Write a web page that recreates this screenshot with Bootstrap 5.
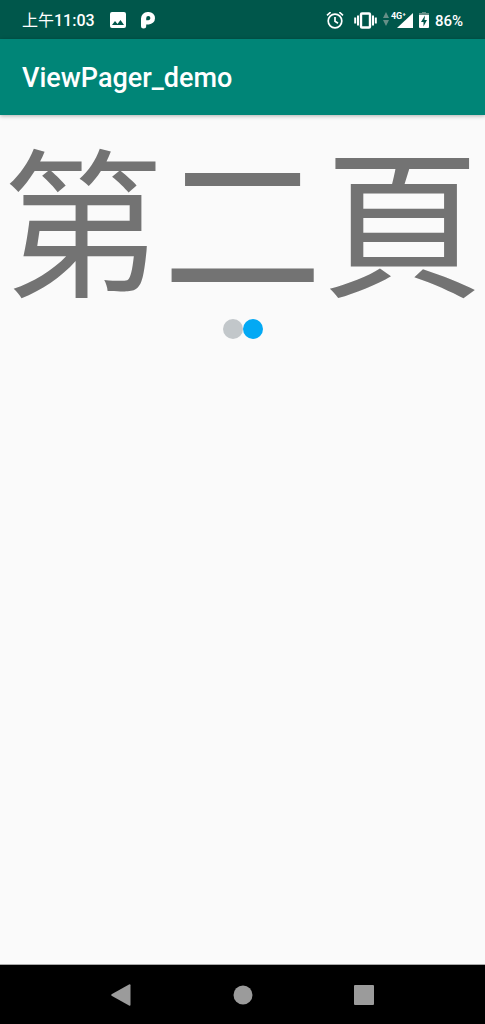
<!DOCTYPE html>
<html lang="zh-Hant">
<head>
<meta charset="utf-8">
<meta name="viewport" content="width=device-width, initial-scale=1">
<title>ViewPager_demo</title>
<link href="https://cdn.jsdelivr.net/npm/bootstrap@5.3.0/dist/css/bootstrap.min.css" rel="stylesheet">
<style>
body { font-family: Roboto, "Noto Sans CJK TC", sans-serif; background: #fafafa; }
svg { display: block; flex: none; }
.status-bar { height: 39px; background: #00574b; color: #fff; font-size: 16px; line-height: 24px; padding: 2px 22px 0; }
.status-bar .battery-level { font-size: 15px; font-weight: 500; }
.clock-time { font-weight: 500; }
.notices { gap: 15px; }
.status-icons { gap: 6px; }
.network { width: 22px; height: 18px; }
.network-type { font-size: 9px; line-height: 8px; font-weight: 700; }
.app-bar { height: 76px; background: #008577; color: #fff; padding: 2px 22px 0; box-shadow: 0 1px 4px rgba(0,0,0,.3); }
.app-title { font-size: 27px; line-height: 36px; font-weight: 500; }
.page-title { font-size: 160px; line-height: 176px; font-weight: 400; color: #737373; padding-top: 28px; }
.pager-dot { width: 20px; height: 20px; border: 0; padding: 0; background: #c2c7ca; }
.pager-dot.active { background: #03a9f4; }
.system-nav { height: 60px; background: #000; border-top: 1px solid #aaa; color: #9b9b9b; }
.system-nav button { width: 25%; color: inherit; }
</style>
</head>
<body>
<div class="d-flex flex-column min-vh-100">
  <div class="status-bar d-flex align-items-center justify-content-between">
    <div class="notices d-flex align-items-center text-nowrap">
      <span>上午<span class="clock-time">11:03</span></span>
      <svg width="16" height="18" viewBox="0 0 16 18" role="img" aria-label="Picture"><path fill="#fff" fill-rule="evenodd" d="M2 0h12a2 2 0 0 1 2 2v12a2 2 0 0 1-2 2H2a2 2 0 0 1-2-2V2a2 2 0 0 1 2-2zM2 13h12l-3.500-5-3 4-2.500-3z"/></svg>
      <svg width="14" height="18" viewBox="0 1 14 18" role="img" aria-label="Notification"><path fill="#fff" fill-rule="evenodd" d="M0 7.500A6.500 6.500 0 0 1 6.500 1H7.800a6.200 6.200 0 0 1 0 12.400H5.200V15Q5.200 17.500 2.600 17.500 0 17.500 0 15ZM5.200 9.300H7.500A2.100 2.100 0 1 0 5.200 7.200Z"/></svg>
    </div>
    <div class="status-icons d-flex align-items-center text-nowrap">
      <svg class="me-1" width="18" height="18" viewBox="0 1 18 18" role="img" aria-label="Alarm" fill="none" stroke="#fff" stroke-width="1.700"><circle cx="9" cy="10" r="6.800"/><path d="M9 6v4.300l3 2M1 4.300l3.600-3.100M17 4.300l-3.600-3.100"/></svg>
      <svg width="23" height="18" viewBox="0 1 23 18" role="img" aria-label="Vibrate" fill="none" stroke="#fff" stroke-width="2"><rect x="7" y="2.500" width="9" height="14" rx="1" stroke-width="2.400"/><path d="M4 4.500v10M1.200 6.500v6M19 4.500v10M21.800 6.500v6"/></svg>
      <div class="d-flex">
        <svg width="8" height="18" viewBox="0 0 8 18" aria-hidden="true" fill="#668f87"><path d="M3 0l3 6H0zM3 14l3-6H0z"/></svg>
        <div class="network position-relative">
          <svg width="22" height="18" viewBox="0 0 22 18" role="img" aria-label="Signal"><path fill="#fff" d="M22 1v15H6z"/></svg>
          <span class="network-type position-absolute top-0 start-0">4G⁺</span>
        </div>
      </div>
      <svg width="10" height="18" viewBox="0 1 10 18" role="img" aria-label="Charging"><path fill="#668f87" d="M3 1h4v1h3v2H0V2h3z"/><path fill="#fff" fill-rule="evenodd" d="M0 4h10v12q0 1-1 1H1q-1 0-1-1zM6 4.500L2 11h2.500v4.500L8 9H5.500z"/></svg>
      <span class="battery-level">86%</span>
    </div>
  </div>
  <header class="app-bar d-flex align-items-center">
    <h1 class="app-title m-0">ViewPager_demo</h1>
  </header>
  <main class="flex-grow-1 overflow-hidden">
    <h2 class="page-title m-0 text-center text-nowrap">第二頁</h2>
    <div class="d-flex justify-content-center">
      <button type="button" class="pager-dot rounded-circle" aria-label="第一頁"></button>
      <button type="button" class="pager-dot rounded-circle active" aria-label="第二頁" aria-current="true"></button>
    </div>
  </main>
  <nav class="system-nav d-flex justify-content-center align-items-center" aria-label="System">
    <button type="button" class="btn p-0 border-0 d-flex justify-content-center" aria-label="Back"><svg width="22" height="22" viewBox="0 0 22 22" fill="currentColor"><path d="M19 .5q1.500-.6 1.500.8v19.400q0 1.400-1.500.8L2 12q-1.600-1 0-2z"/></svg></button>
    <button type="button" class="btn p-0 border-0 d-flex justify-content-center" aria-label="Home"><svg width="20" height="20" viewBox="0 0 20 20" fill="currentColor"><circle cx="10" cy="10" r="9.500"/></svg></button>
    <button type="button" class="btn p-0 border-0 d-flex justify-content-center" aria-label="Recent apps"><svg width="20" height="20" viewBox="0 0 20 20" fill="currentColor"><rect width="20" height="20" rx="1"/></svg></button>
  </nav>
</div>
<script src="https://cdn.jsdelivr.net/npm/bootstrap@5.3.0/dist/js/bootstrap.bundle.min.js"></script>
</body>
</html>
